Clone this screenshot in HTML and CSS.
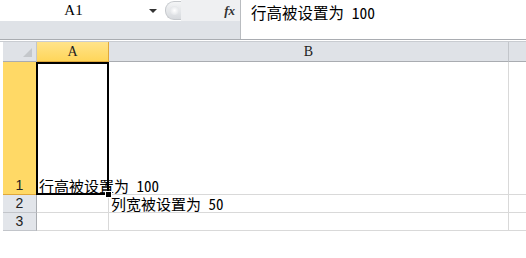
FILE: index.html
```html
<!DOCTYPE html>
<html>
<head>
<meta charset="utf-8">
<link rel="stylesheet" href="styles.css">
</head>
<body>
<div class="fbar">
  <div class="fleft">
    <div class="ftop">
      <div class="namebox">A1</div>
      <div class="arrow"></div>
      <div class="handle"></div>
      <div class="fxzone"><span class="fx">fx</span></div>
    </div>
    <div class="fbottom"></div>
  </div>
  <div class="fright">行高被设置为 100</div>
</div>
<div class="gap"></div>
<div class="sheet">
  <div class="corner"><div class="tri"></div></div>
  <div class="colh sel">A</div>
  <div class="colh">B</div>
  <div class="colh last"></div>

  <div class="rowh sel r1">1</div>
  <div class="cell r1 a1"><span class="txt">行高被设置为 100</span><div class="handlebox"></div></div>
  <div class="cell r1"></div>
  <div class="cell r1 last"></div>

  <div class="rowh">2</div>
  <div class="cell"></div>
  <div class="cell"><span class="txt2">列宽被设置为 50</span></div>
  <div class="cell last"></div>

  <div class="rowh">3</div>
  <div class="cell"></div>
  <div class="cell"></div>
  <div class="cell last"></div>
</div>
</body>
</html>
```
FILE: styles.css
```css
html, body { margin: 0; padding: 0; background: #fff; }
body { font-family: "Noto Sans Mono CJK SC", "Noto Sans CJK SC", monospace; font-size: 15px; color: #000; width: 526px; height: 258px; overflow: hidden; }

.fbar { display: flex; height: 39px; border-bottom: 1px solid #a9acb1; }
.fleft { width: 240px; display: flex; flex-direction: column; }
.ftop { height: 21px; display: flex; align-items: center; background: #fff; }
.namebox { width: 147px; text-align: center; line-height: 21px; font-family: "Liberation Serif", serif; font-size: 15px; }
.arrow { width: 0; height: 0; border-left: 4px solid transparent; border-right: 4px solid transparent; border-top: 4px solid #333; margin-left: 2px; }
.handle { width: 16px; height: 19px; margin-left: 8px; border-radius: 9px 0 0 9px; background: linear-gradient(#f4f5f6, #d7dade); border: 1px solid #c5c8cc; border-right: none; box-sizing: border-box; position: relative; }
.handle::after { content: ""; position: absolute; left: 4px; top: 4px; width: 9px; height: 9px; border-radius: 50%; background: radial-gradient(#fff, #dadde1); }
.fxzone { flex: 1; height: 21px; background: #eff0f2; display: flex; justify-content: flex-end; align-items: center; padding-right: 5px; }
.fx { font-family: "Liberation Serif", serif; font-style: italic; font-weight: bold; font-size: 13px; color: #333; }
.fbottom { flex: 1; background: #dfe2e7; }
.fright { flex: 1; border-left: 1px solid #b9bcc0; padding-left: 10px; line-height: 24px; font-size: 15.5px; }

.gap { height: 1px; background: #fff; border-bottom: 1px solid #c9ccd1; }

.sheet { display: grid; grid-template-columns: 34px 72px 400px 17px; grid-template-rows: 20px 133px 18px 18px; margin-left: 3px; }
.corner, .colh { background: #dfe2e7; border-right: 1px solid #c2c5ca; border-bottom: 1px solid #a9acb1; box-sizing: border-box; text-align: center; line-height: 19px; font-family: "Liberation Serif", serif; font-size: 14px; color: #222; }
.corner { position: relative; border-right: 1px solid #c2c5ca; }
.tri { position: absolute; right: 4px; bottom: 4px; width: 0; height: 0; border-left: 9px solid transparent; border-bottom: 9px solid #c4c7cb; }
.colh.sel { background: linear-gradient(#ffe38a, #ffd65a); border-right: 1px solid #e0a83a; border-bottom: 1px solid #e0a83a; }
.colh.last { border-right: none; }
.rowh { background: #e2e5ea; border-right: 1px solid #a9acb1; border-bottom: 1px solid #c2c5ca; box-sizing: border-box; display: flex; align-items: flex-end; justify-content: center; font-family: "Liberation Sans", sans-serif; font-size: 14px; line-height: 17px; color: #222; }
.rowh.sel { background: #ffd966; border-bottom: 1px solid #e0a83a; border-right: 1px solid #e0a83a; }
.cell { border-right: 1px solid #d9d9d9; border-bottom: 1px solid #d9d9d9; box-sizing: border-box; position: relative; }
.cell.last { border-right: none; }
.a1 { border: 2px solid #000; margin-left: -1px; }
.txt { position: absolute; left: 1px; bottom: -1px; white-space: nowrap; font-size: 15px; line-height: 17px; z-index: 2; }
.txt2 { position: absolute; left: 2px; bottom: 0; white-space: nowrap; font-size: 15px; line-height: 17px; }
.handlebox { position: absolute; right: -5px; bottom: -5px; width: 5px; height: 5px; background: #000; border: 1px solid #fff; z-index: 3; }
```
